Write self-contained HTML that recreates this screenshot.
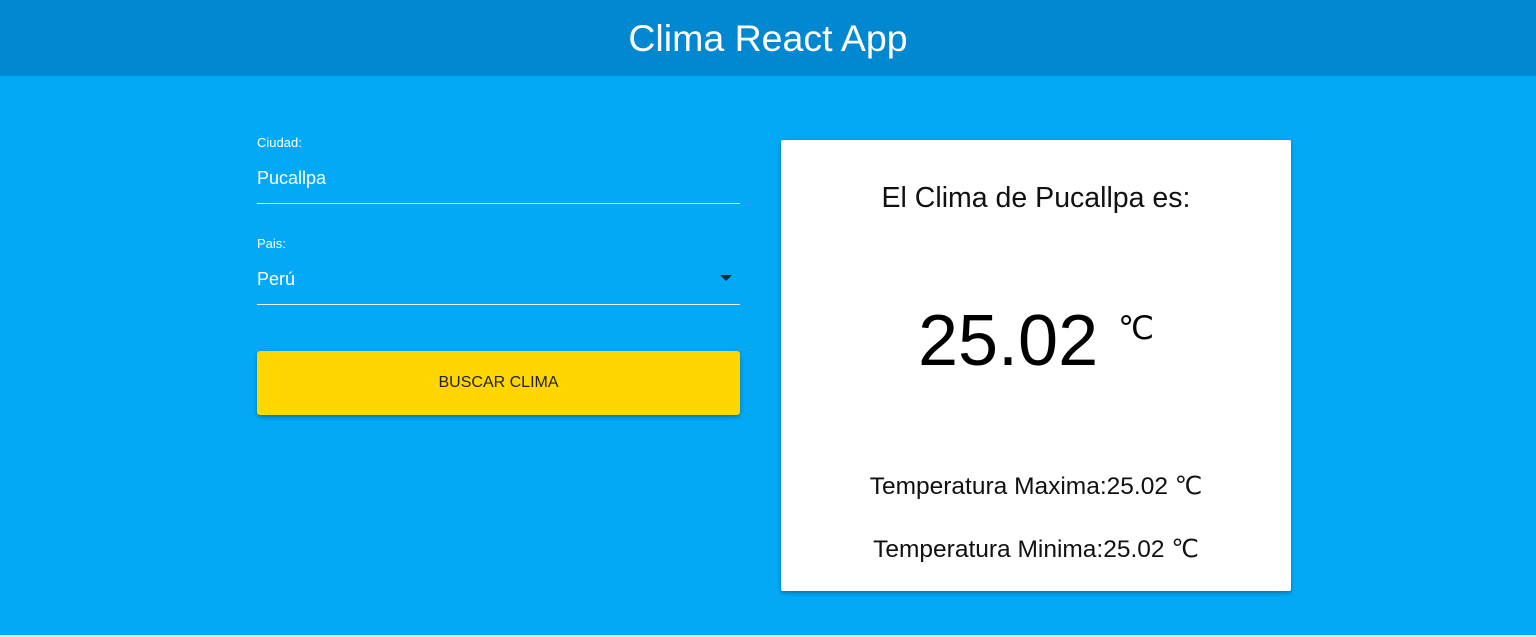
<!DOCTYPE html>
<html><head><style>
body{margin:0;width:1536px;height:637px;background:#03a9f4;font-family:"Liberation Sans",sans-serif;position:relative;overflow:hidden}
.hdr{position:absolute;left:0;top:0;width:1536px;height:76px;background:#0288d1;color:#fff;font-size:37.5px;text-align:center;line-height:76px}
.lbl{position:absolute;left:257px;color:#fff;font-size:13px}
.val{position:absolute;left:257px;color:#fff;font-size:18px}
.line{position:absolute;left:257px;width:483px;height:1px;background:#e8f6fd}
.btn{position:absolute;left:257px;top:351px;width:483px;height:64px;background:#ffd600;border-radius:3px;box-shadow:0 2px 4px rgba(0,0,0,.3);text-align:center;line-height:64px;font-size:16px;color:#222}
.card{position:absolute;left:781px;top:140px;width:510px;height:451px;background:#fff;border-radius:2px;box-shadow:0 2px 4px rgba(0,0,0,.3);text-align:center}
.c{font-family:"Liberation Serif",serif}
.bot{position:absolute;left:0;top:635px;width:1536px;height:2px;background:#dff3fc}
</style></head><body>
<div class="hdr">Clima React App</div>
<div class="lbl" style="top:135px">Ciudad:</div>
<div class="val" style="top:168px">Pucallpa</div>
<div class="line" style="top:203px"></div>
<div class="lbl" style="top:236px">Pais:</div>
<div class="val" style="top:269px">Perú</div>
<div style="position:absolute;left:720px;top:275px;border-left:6px solid transparent;border-right:6px solid transparent;border-top:6px solid #0a2540"></div>
<div class="line" style="top:304px"></div>
<div class="btn">BUSCAR CLIMA</div>
<div class="card">
<div style="position:absolute;left:0;width:100%;top:42px;font-size:28.5px;color:#111">El Clima de Pucallpa es:</div>
<div style="position:absolute;left:0;width:100%;top:165px;font-size:72px;color:#000;line-height:1">25.02 <span class="c" style="font-size:32px;vertical-align:26px">℃</span></div>
<div style="position:absolute;left:0;width:100%;top:331px;font-size:24.5px;color:#111">Temperatura Maxima:25.02 <span class="c">℃</span></div>
<div style="position:absolute;left:0;width:100%;top:394px;font-size:24.5px;color:#111">Temperatura Minima:25.02 <span class="c">℃</span></div>
</div>
<div class="bot"></div>
</body></html>
